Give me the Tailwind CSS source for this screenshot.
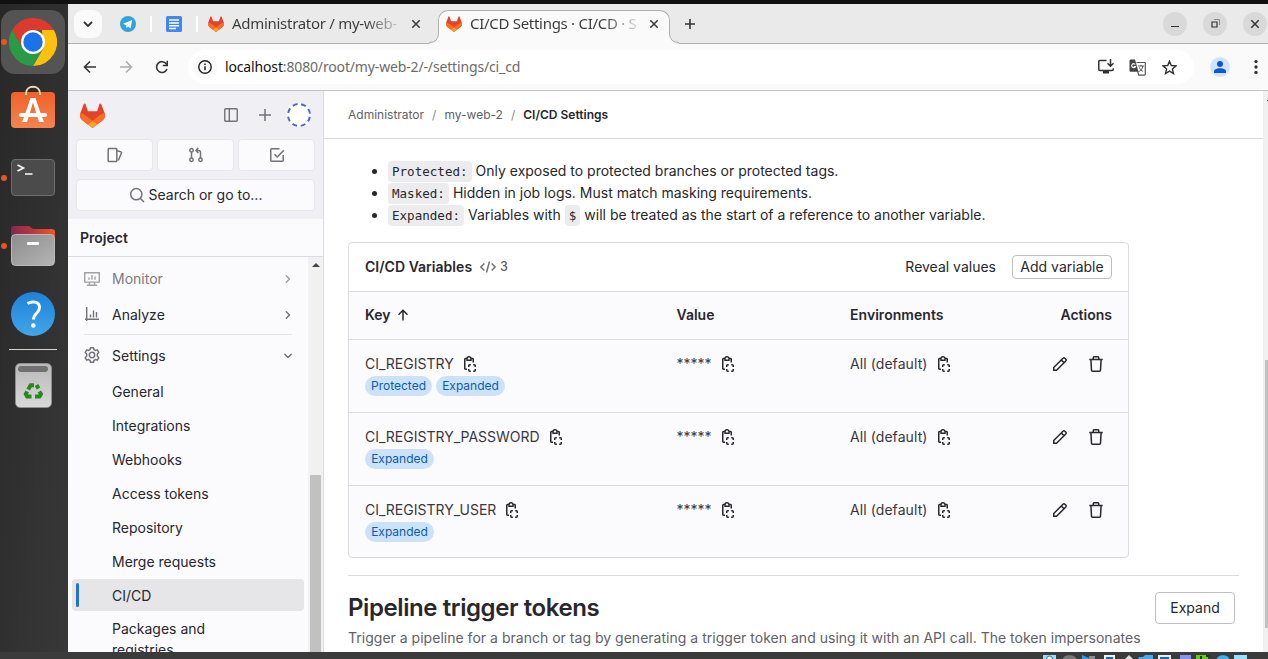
<!DOCTYPE html>
<html lang="en">
<head>
<meta charset="utf-8">
<title>CI/CD Settings · CI/CD · Settings</title>
<script src="https://cdn.jsdelivr.net/npm/@tailwindcss/browser@4"></script>
</head>
<body class="w-[1268px] h-[659px] overflow-hidden bg-white font-['Inter',sans-serif] text-[14px] leading-5 text-[#28272d]">
<svg class="hidden">
  <defs>
    <symbol id="fox" viewBox="0 0 24 24"><path fill="#E24329" d="M23.6 9.6 20.3.9a.86.86 0 0 0-1.6.1l-2.300 6.900H7.600L5.300 1A.86.86 0 0 0 3.700.9L.4 9.600a6.200 6.200 0 0 0 2 7.100L12 24l9.600-7.300a6.200 6.200 0 0 0 2-7.100Z"/><path fill="#FC6D26" d="M23.600 9.600a11.200 11.200 0 0 0-4.500 2L12 17l4.500 3.400 5.100-3.900a6.200 6.200 0 0 0 2-6.900Z"/><path fill="#FCA326" d="m7.500 20.400 3.600 2.800a1.400 1.400 0 0 0 1.800 0l3.600-2.800L12 17l-4.500 3.400Z"/><path fill="#FC6D26" d="M4.900 11.600A11.200 11.200 0 0 0 .4 9.600a6.200 6.200 0 0 0 2 6.900l5.100 3.900L12 17l-7.100-5.400Z"/></symbol>
    <symbol id="copy" viewBox="0 0 16 16"><g fill="none" stroke="currentColor" stroke-width="1.500"><path d="M5 13.250H3.500a.75.750 0 0 1-.75-.75V3.250a.75.750 0 0 1 .75-.75H5M9 2.500h1.500a.75.750 0 0 1 .75.750V6.500"/><path d="M5 4.250h4V2.700a2 2 0 0 0-4 0z" stroke-width="1.400"/><path d="M6.750 11V9.700a.9.900 0 0 1 .9-.9H8.800M11.200 8.800h1.150a.9.900 0 0 1 .9.900V11M13.250 13v1.300a.9.900 0 0 1-.9.900H11.200M8.800 15.200H7.650a.9.900 0 0 1-.9-.9V13"/></g></symbol>
    <symbol id="pencil" viewBox="0 0 16 16"><path fill="none" stroke="currentColor" stroke-width="1.500" d="M1.750 14.250v-2.700L11 2.250a1.300 1.300 0 0 1 1.900 0l.9.900a1.300 1.300 0 0 1 0 1.900L4.500 14.250zM9.300 4l2.800 2.800"/></symbol>
    <symbol id="trash" viewBox="0 0 16 16"><path fill="none" stroke="currentColor" stroke-width="1.500" d="M1.300 3.500h13.400M5.300 3.500V1.600a.9.900 0 0 1 .9-.9h3.600a.9.900 0 0 1 .9.900v1.900M2.900 3.500l.6 10.700a1 1 0 0 0 1 .95h7a1 1 0 0 0 1-.95l.6-10.700"/></symbol>
    <symbol id="chev" viewBox="0 0 16 16"><path fill="none" stroke="currentColor" stroke-width="1.500" stroke-linecap="round" stroke-linejoin="round" d="m6.300 4.800 3.200 3.200-3.200 3.200"/></symbol>
    <symbol id="close" viewBox="0 0 10 10"><path stroke="currentColor" stroke-width="1.500" d="m1.300 1.300 7.400 7.400m0-7.400L1.300 8.700"/></symbol>
  </defs>
</svg>

<div class="flex h-full flex-col">
  <div class="h-1 shrink-0 bg-[#111]"></div>
  <div class="flex h-[648px] shrink-0">
    <!-- dock -->
    <aside class="relative flex w-[68px] shrink-0 flex-col items-center bg-gradient-to-br from-[#282828] via-[#303030] to-[#383838] pt-[6px] pr-[2px]">
      <div class="flex h-16 w-16 items-center justify-center rounded-[14px] bg-[#545454]">
        <svg class="size-12" viewBox="0 0 48 48">
          <path fill="#dc3a2d" d="M3.200 12A24 24 0 0 1 44.800 12H24L13.600 30z"/>
          <path fill="#fcc00f" d="M44.800 12A24 24 0 0 1 24 48l10.400-18L33 12z"/>
          <path fill="#2a9a47" d="M3.200 12A24 24 0 0 0 24 48l10.400-18-20.800 0z"/>
          <circle cx="24" cy="24" r="12" fill="#fff"/><circle cx="24" cy="24" r="9.700" fill="#1a73e8"/>
        </svg>
      </div>
      <svg class="mt-[11px] h-[46px] w-[46px]" viewBox="0 0 46 46">
        <defs><linearGradient id="so" x2="0" y2="1"><stop stop-color="#f1602a"/><stop offset="1" stop-color="#f4844f"/></linearGradient></defs>
        <rect x="1" y="7" width="44" height="36" rx="4" fill="url(#so)"/>
        <path d="M16 10V8.500c0-9 14-9 14 0V10" fill="none" stroke="#f7dcae" stroke-width="2"/>
        <path d="M20.500 13h5l5 15h-4.300L23 17.500 19.800 28h-4.300zM14 32h4.500L17 37h-5zM27.500 32H32l2 5h-5z" fill="#fff"/>
        <rect x="9" y="28" width="28" height="4" rx="2" fill="#fff"/>
      </svg>
      <div class="mt-[28px] flex h-[37px] w-[44px] rounded-[4px] border border-[#6d6d6d] bg-[#4b4b4b] pt-[4px] pl-[5px]">
        <svg class="h-3 w-4" viewBox="0 0 16 12"><path d="m.5 1 6 3-6 3M8 10h7.500" fill="none" stroke="#fff" stroke-width="1.600"/></svg>
      </div>
      <svg class="mt-[29px] h-[42px] w-[46px]" viewBox="0 0 46 42">
        <defs><linearGradient id="fa"><stop stop-color="#842752"/><stop offset=".5" stop-color="#b8383f"/><stop offset="1" stop-color="#ee5a24"/></linearGradient><linearGradient id="fb" x2="1" y2="1"><stop stop-color="#8c8c8c"/><stop offset="1" stop-color="#b5b5b5"/></linearGradient></defs>
        <path d="M1 14V4a3 3 0 0 1 3-3h14c3 0 3 3 6 3h18a3 3 0 0 1 3 3v7z" fill="url(#fa)"/>
        <rect x="1.500" y="9.500" width="43" height="31" rx="4" fill="url(#fb)" stroke="#b9b9b9"/>
        <rect x="17" y="17" width="12" height="3" rx="1" fill="#fff"/>
      </svg>
      <svg class="mt-[24px] size-[46px]" viewBox="0 0 46 46">
        <defs><linearGradient id="hp" x2="0" y2="1"><stop stop-color="#1d82db"/><stop offset="1" stop-color="#42a5e8"/></linearGradient></defs>
        <circle cx="23" cy="23" r="22" fill="url(#hp)"/>
        <path d="M17.500 12.500c4-2.500 12-2.500 12 4 0 6-6 5.500-6 12" fill="none" stroke="#fff" stroke-width="3"/><circle cx="23.300" cy="34.500" r="2.300" fill="#fff"/>
      </svg>
      <div class="mt-3 h-px w-12 bg-[#d5d5d5]"></div>
      <div class="mt-[13px] flex h-[45px] w-[37px] flex-col items-center rounded-[5px] border border-[#8f8f8f] bg-gradient-to-b from-[#b9b9b9] to-[#d8d8d8] pt-[2px]">
        <div class="h-[6px] w-[30px] rounded-[3px] bg-[#717171]"></div>
        <svg class="mt-[9px] size-5" viewBox="0 0 20 20" fill="none" stroke="#26891d" stroke-width="4"><path d="m5.200 8.500 2.500-4.300h3.300M13.500 4l2 3.500M16.300 10.500 18 13l-1.500 2.500H12M8.500 15.500H4.200L2.800 13l1.500-2.500"/></svg>
      </div>
      <i class="absolute top-[35px] left-[1px] size-[6px] rounded-full bg-[#e95420]"></i>
      <i class="absolute top-[171px] left-[1px] size-[6px] rounded-full bg-[#e95420]"></i>
      <i class="absolute top-[239px] left-[1px] size-[6px] rounded-full bg-[#e95420]"></i>
    </aside>

    <div class="flex min-w-0 flex-1 flex-col">
      <!-- tab strip -->
      <div class="relative flex h-10 shrink-0 items-center border-b border-[#b0b0b0] bg-[#eaeaea] font-['Noto_Sans',sans-serif] text-[15px] text-[#3a3a3a]">
        <div class="ml-[6px] flex size-7 items-center justify-center rounded-[9px] bg-[#fafafa]"><svg class="h-2 w-3" viewBox="0 0 12 8"><path d="m2 2 4 4 4-4" fill="none" stroke="#333" stroke-width="1.800"/></svg></div>
        <svg class="ml-[18px] size-4" viewBox="0 0 16 16"><circle cx="8" cy="8" r="8" fill="#2fa3dc"/><path d="m3 7.800 9.200-3.700-1.700 8.300-2.500-1.800-1.500 1.400-.5-2.700z" fill="#fff"/><path d="m6 9.200 4.500-3.300-3.700 4z" fill="#b7dcf0"/></svg>
        <i class="ml-[14px] h-4 w-[2px] bg-white"></i>
        <svg class="ml-[14px] size-4" viewBox="0 0 16 16"><rect width="16" height="16" rx="1.500" fill="#4285f4"/><path d="M3 4h10M3 7h10M3 9.800h10M3 12.500h7" stroke="#fff" stroke-width="1.400"/></svg>
        <i class="ml-[14px] h-4 w-[2px] bg-white"></i>
        <svg class="ml-[10px] size-4"><use href="#fox"/></svg>
        <div class="ml-2 w-[167px] -translate-y-px whitespace-nowrap"><span class="bg-gradient-to-r from-[#3a3a3a] from-80% to-[#3a3a3a]/20 bg-clip-text tracking-[-0.29px] text-transparent">Administrator / my-web-</span></div>
        <svg class="ml-3 size-[10px]"><use href="#close"/></svg>
        <div class="absolute top-[6px] left-[370px] flex h-[34px] w-[232px] items-center rounded-t-[10px] border border-b-0 border-[#b0b0b0] bg-[#fafafa] pb-[7px] pl-[7px]">
          <svg class="absolute -left-[10px] bottom-0 h-[11px] w-[10px]" viewBox="0 0 10 11"><path d="M0 10.500Q9.500 10 9.500 0H10V11H0" fill="#fafafa"/><path d="M0 9.500Q9.500 9.500 9.500 0" fill="none" stroke="#b0b0b0"/></svg>
          <svg class="size-4"><use href="#fox"/></svg>
          <div class="ml-2 w-[167px] -translate-y-px whitespace-nowrap"><span class="bg-gradient-to-r from-[#3a3a3a] from-80% to-[#3a3a3a]/20 bg-clip-text tracking-[-0.29px] text-transparent">CI/CD Settings · CI/CD · S</span></div>
          <svg class="ml-3 size-[10px]"><use href="#close"/></svg>
          <svg class="absolute -right-[10px] bottom-0 h-[11px] w-[10px]" viewBox="0 0 10 11"><path d="M10 10.500Q.5 10 .5 0H0V11H10" fill="#fafafa"/><path d="M10 9.500Q.5 9.500.5 0" fill="none" stroke="#b0b0b0"/></svg>
        </div>
        <svg class="ml-[263px] size-3 shrink-0" viewBox="0 0 12 12"><path d="M6 1v10M1 6h10" stroke="#333" stroke-width="1.600"/></svg>
        <div class="ml-auto flex gap-4 pr-px">
          <div class="flex size-6 items-center justify-center rounded-full bg-[#d9d9d9]"><i class="mt-[5px] h-px w-2 bg-[#333]"></i></div>
          <div class="flex size-6 items-center justify-center rounded-full bg-[#d9d9d9]"><svg class="size-[9px]" viewBox="0 0 9 9"><path d="M1 3h5v5H1z" fill="none" stroke="#333" stroke-width="1.200"/><path d="M3 .5h5.500V6" fill="none" stroke="#888"/></svg></div>
          <div class="flex size-6 items-center justify-center rounded-full bg-[#d9d9d9]"><svg class="size-[10px] text-[#333]"><use href="#close"/></svg></div>
        </div>
      </div>
      <!-- toolbar -->
      <div class="flex h-[47px] shrink-0 items-center border-b border-[#c4c4c4] bg-[#fafafa] text-[#333]">
        <svg class="ml-[15px] size-[14px]" viewBox="0 0 14 14"><path d="M13 7H2M7 1.500 1.500 7 7 12.500" fill="none" stroke="currentColor" stroke-width="1.600"/></svg>
        <svg class="ml-[22px] size-[14px] text-[#adadad]" viewBox="0 0 14 14"><path d="M1 7h11M7 1.500 12.500 7 7 12.500" fill="none" stroke="currentColor" stroke-width="1.600"/></svg>
        <svg class="ml-[22px] size-[14px]" viewBox="0 0 14 14"><path d="M12 9a5.400 5.400 0 1 1-.6-5l1 1.200" fill="none" stroke="currentColor" stroke-width="1.600"/><path d="M13 .8v5.400H7.800V4.800h3.700V.8z" fill="currentColor"/></svg>
        <div class="ml-[19px] flex h-[34px] w-[1006px] items-center rounded-full bg-white pl-[5px]">
          <div class="flex size-6 items-center justify-center rounded-full bg-[#fafafa]"><svg class="size-[14px]" viewBox="0 0 14 14"><circle cx="7" cy="7" r="6.200" fill="none" stroke="#222" stroke-width="1.400"/><path d="M7 6.200V10.200M7 3.600V5" stroke="#222" stroke-width="1.500"/></svg></div>
          <div class="ml-[8px] font-['Noto_Sans',sans-serif] text-[14px] tracking-[-0.15px] text-[#6b6b6b]"><span class="text-[#111]">localhost</span>:8080/root/my-web-2/-/settings/ci_cd</div>
          <svg class="ml-auto h-4 w-4" viewBox="0 0 16 16"><path d="M8.500 1.500H1.800a1 1 0 0 0-1 1v8a1 1 0 0 0 1 1h12.400a1 1 0 0 0 1-1V9.300M12.500 0v7M9.500 4.300l3 3 3-3" fill="none" stroke="currentColor" stroke-width="1.500"/><path d="M5 12h6v2.500H5z" fill="currentColor"/></svg>
          <svg class="ml-[15px] h-[17px] w-[17px]" viewBox="0 0 17 17"><path d="M1.500.5H6l3.500 12.300H1.500a1 1 0 0 1-1-1V1.500a1 1 0 0 1 1-1z" fill="#444"/><path d="M7.500 3.500h8a.8.800 0 0 1 .8.800v11a.8.800 0 0 1-.8.800H9.800L8.500 12" fill="none" stroke="#555" stroke-width="1.200"/><path d="M6.300 5.500A2 2 0 1 0 6.500 7.500H4.800" stroke="#fff" fill="none" stroke-width="1.100"/><path d="M9 7h6M12 5.800V7m1.700 0c0 3-2 5-4 5.500M10.500 8.500c.5 2 2 3 3.500 4" fill="none" stroke="#555"/></svg>
          <svg class="mr-[17px] ml-4 size-[15px]" viewBox="0 0 15 15"><path d="m7.500 1.200 1.800 4.300 4.700.4-3.600 3.100 1.100 4.600-4-2.500-4 2.500L4.600 9 1 5.900l4.700-.4z" fill="none" stroke="currentColor" stroke-width="1.400"/></svg>
        </div>
        <svg class="ml-4 size-5" viewBox="0 0 20 20"><circle cx="10" cy="10" r="10" fill="#d3e3fd"/><circle cx="10" cy="7" r="3" fill="#0b57d0"/><path d="M4 16v-1.500c0-2.200 3-3.300 6-3.300s6 1.100 6 3.300V16z" fill="#0b57d0"/></svg>
        <svg class="ml-[24px] h-4 w-[4px]" viewBox="0 0 4 16" fill="#333"><circle cx="2" cy="2.600" r="1.700"/><circle cx="2" cy="8" r="1.700"/><circle cx="2" cy="13.400" r="1.700"/></svg>
      </div>

      <div class="flex min-h-0 flex-1">
        <!-- project sidebar -->
        <nav class="flex w-64 shrink-0 flex-col overflow-hidden border-r border-[#dcdcde] bg-[#fbfafd]">
          <div class="h-32 shrink-0 bg-[#f0eff3]">
            <div class="flex h-12 items-center pl-3 text-[#737278]">
              <svg class="size-[25px]"><use href="#fox"/></svg>
              <svg class="ml-[118px] size-4" viewBox="0 0 16 16"><path d="M2.750 1.750h10.500a1 1 0 0 1 1 1v10.500a1 1 0 0 1-1 1H2.750a1 1 0 0 1-1-1V2.750a1 1 0 0 1 1-1zM6.300 2v12" fill="none" stroke="currentColor" stroke-width="1.400"/></svg>
              <svg class="ml-[18px] size-4" viewBox="0 0 16 16"><path d="M8 2v12M2 8h12" stroke="currentColor" stroke-width="1.500"/></svg>
              <svg class="ml-[14px] size-6" viewBox="0 0 24 24"><circle cx="12" cy="12" r="12" fill="#fff"/><circle cx="12" cy="12" r="11" fill="none" stroke="#5468bd" stroke-width="2" stroke-dasharray="5 3.640" stroke-dashoffset="6.800"/></svg>
            </div>
            <div class="flex gap-[4px] px-2 text-[#737278]">
              <div class="flex h-8 w-[77px] items-center justify-center rounded-[4px] border border-[#e7e6eb] bg-[#fbfafd]"><svg class="size-4" viewBox="0 0 16 16"><path d="M2 1.500h7a.8.800 0 0 1 .8.800v11.400a.8.800 0 0 1-.8.800H2a.8.800 0 0 1-.8-.8V2.300a.8.800 0 0 1 .8-.8zM10.200 3.700l3.900 1.200a.7.700 0 0 1 .5.900L11.300 13.500" fill="none" stroke="currentColor" stroke-width="1.500"/></svg></div>
              <div class="flex h-8 w-[77px] items-center justify-center rounded-[4px] border border-[#e7e6eb] bg-[#fbfafd]"><svg class="size-4" viewBox="0 0 16 16"><g fill="none" stroke="currentColor" stroke-width="1.500"><circle cx="3.500" cy="3.200" r="1.700"/><circle cx="3.500" cy="12.800" r="1.700"/><circle cx="12.500" cy="12.800" r="1.700"/><path d="M3.500 5v6M12.500 11V5.500a2 2 0 0 0-2-2H8M10.300 1 8 3.500 10.300 6"/></g></svg></div>
              <div class="flex h-8 w-[77px] items-center justify-center rounded-[4px] border border-[#e7e6eb] bg-[#fbfafd]"><svg class="size-4" viewBox="0 0 16 16"><path d="M10.500 1.750H2.750a1 1 0 0 0-1 1v10.500a1 1 0 0 0 1 1h10.500a1 1 0 0 0 1-1V8M5.500 7.300 8.200 10l6.600-6.600" fill="none" stroke="currentColor" stroke-width="1.500"/></svg></div>
            </div>
            <div class="mx-2 mt-2 flex h-8 w-[239px] items-center justify-center gap-[4px] rounded-[4px] border border-[#e7e6eb] bg-[#fbfafd]"><svg class="size-4 text-[#737278]" viewBox="0 0 16 16"><path d="m11.500 11.500 3.500 3.500M12.900 7.200a5.600 5.600 0 1 1-11.200 0 5.600 5.600 0 0 1 11.200 0z" fill="none" stroke="currentColor" stroke-width="1.500"/></svg><span>Search or go to...</span></div>
          </div>
          <div class="flex h-[38px] shrink-0 items-center border-b border-[#dcdcde] pl-3 font-semibold">Project</div>
          <div class="flex min-h-0 flex-1 overflow-hidden">
            <div class="w-[240px] shrink-0 pt-[4px]">
              <div class="flex h-9 items-center pl-4 text-[#7c7b80]"><svg class="size-4 opacity-70" viewBox="0 0 16 16"><path d="M.7 1.700h14.600v9.400H.7zM5.500 11v3M10.500 11v3M3 14.300h10M5 6.500v2.300M8 4v4.800M11 5.500v3.300" fill="none" stroke="currentColor" stroke-width="1.400"/></svg><span class="ml-3">Monitor</span><svg class="mr-3 ml-auto size-4 opacity-70"><use href="#chev"/></svg></div>
              <div class="flex h-9 items-center pl-4"><svg class="size-4 text-[#737278]" viewBox="0 0 16 16"><path d="M2.700 0v14M1 12.300h14M6.500 7.500v3M9.500 3.500v7M12.500 5v5.500" fill="none" stroke="currentColor" stroke-width="1.400"/></svg><span class="ml-3">Analyze</span><svg class="mr-3 ml-auto size-4 text-[#737278]"><use href="#chev"/></svg></div>
              <div class="mx-4 mt-px mb-[3px] h-px bg-[#e4e3e8]"></div>
              <div class="flex h-9 items-center pl-4"><svg class="-mt-[2px] size-4 text-[#737278]" viewBox="0 0 16 16"><g fill="none" stroke="currentColor" stroke-width="1.500" stroke-linejoin="round"><path d="M6.500.75h3l.5 1.950 1.300.75 2-.6 1.500 2.500L13.350 6.900v2.200l1.450 1.550-1.500 2.500-2-.6-1.300.75-.5 1.950h-3L6 13.300l-1.300-.75-2 .6-1.500-2.500L2.650 9.100V6.900L1.200 5.350l1.500-2.500 2 .6L6 2.700z"/><circle cx="8" cy="8" r="2.700"/></g></svg><span class="ml-3">Settings</span><svg class="mr-3 ml-auto size-4 rotate-90 text-[#737278]"><use href="#chev"/></svg></div>
              <div class="flex h-9 items-center pl-11">General</div>
              <div class="mt-[-1px] flex h-[34px] items-center pl-11">Integrations</div>
              <div class="flex h-[34px] items-center pl-11">Webhooks</div>
              <div class="flex h-[34px] items-center pl-11">Access tokens</div>
              <div class="flex h-[34px] items-center pl-11">Repository</div>
              <div class="flex h-[34px] items-center pl-11">Merge requests</div>
              <div class="mr-1 ml-1 flex h-8 items-center rounded-[4px] bg-[#e6e5e8] pl-1"><i class="h-6 w-[3px] rounded bg-[#1f75cb]"></i><span class="ml-[33px] pt-[2px]">CI/CD</span></div>
              <div class="mt-[7px] w-[180px] pl-11 leading-[21px]">Packages and registries</div>
            </div>
            <div class="flex w-[15px] flex-col items-center bg-[#f1f1f1] pt-1"><i class="mt-[2px] h-0 w-0 border-x-4 border-b-4 border-x-transparent border-b-[#444]"></i><i class="mt-[208px] w-[11px] flex-1 bg-[#c1c1c1]"></i></div>
          </div>
        </nav>

        <!-- page -->
        <main class="flex w-[939px] shrink-0 flex-col overflow-hidden bg-white">
          <div class="flex h-12 shrink-0 items-center border-b border-[#dcdcde] pl-6 text-[12px] text-[#626168]"><span>Administrator</span><span class="mx-2 text-[#89888d]">/</span><span>my-web-2</span><span class="mx-2 text-[#89888d]">/</span><span class="font-semibold text-[#28272d]">CI/CD Settings</span></div>
          <div class="pr-6 pl-6">
            <ul class="mt-[21px] pl-6 leading-[22px]">
              <li class="flex h-[22px] items-center"><i class="mr-[11px] size-[5px] rounded-full bg-[#28272d]"></i><code class="mr-1 h-[21px] rounded-[4px] bg-[#ececef] px-[4px] font-['DejaVu_Sans_Mono',monospace] text-[12.550px] leading-[21px]">Protected:</code><span>Only exposed to protected branches or protected tags.</span></li>
              <li class="flex h-[22px] items-center"><i class="mr-[11px] size-[5px] rounded-full bg-[#28272d]"></i><code class="mr-1 h-[21px] rounded-[4px] bg-[#ececef] px-[4px] font-['DejaVu_Sans_Mono',monospace] text-[12.550px] leading-[21px]">Masked:</code><span>Hidden in job logs. Must match masking requirements.</span></li>
              <li class="flex h-[22px] items-center"><i class="mr-[11px] size-[5px] rounded-full bg-[#28272d]"></i><code class="mr-1 h-[21px] rounded-[4px] bg-[#ececef] px-[4px] font-['DejaVu_Sans_Mono',monospace] text-[12.550px] leading-[21px]">Expanded:</code><span>Variables with</span><code class="mx-[4px] h-[21px] rounded-[4px] bg-[#ececef] px-[4px] font-['DejaVu_Sans_Mono',monospace] text-[12.550px] leading-[21px]">$</code><span class="tracking-[0.016px]">will be treated as the start of a reference to another variable.</span></li>
            </ul>

            <section class="mt-4 w-[781px] rounded-[4px] border border-[#dcdcde] bg-[#fbfafd]">
              <div class="flex h-[49px] items-center rounded-t-[4px] border-b border-[#dcdcde] bg-white px-4">
                <span class="font-semibold tracking-[0.03px]">CI/CD Variables</span>
                <svg class="ml-2 size-4 text-[#737278]" viewBox="0 0 16 16"><path d="M4.300 4.500.9 8l3.400 3.500M11.700 4.500 15.100 8l-3.400 3.500M9.500 2.500l-3 11" fill="none" stroke="currentColor" stroke-width="1.500"/></svg>
                <span class="ml-1 text-[12.500px] font-medium text-[#626168]">3</span>
                <span class="ml-auto">Reveal values</span>
                <span class="ml-4 flex h-6 w-[100px] items-center justify-center rounded-[4px] border border-[#bfbfc3]">Add variable</span>
              </div>
              <div class="grid h-12 grid-cols-[311.500px_173.500px_1fr_auto] items-center border-b border-[#dcdcde] px-4 pb-[2px] font-semibold">
                <span class="flex items-center">Key<svg class="ml-[6px] size-3" viewBox="0 0 12 12"><path d="M6 11.500V1.500M1.500 5.700 6 1.300l4.500 4.400" fill="none" stroke="currentColor" stroke-width="1.500"/></svg></span><span>Value</span><span class="tracking-[0.04px]">Environments</span><span>Actions</span>
              </div>
              <div class="grid h-[73px] grid-cols-[311.500px_173.500px_1fr_auto] border-b border-[#dcdcde] px-4 pt-[14px] text-[#3a383f]">
                <div><div class="flex h-5 items-center"><span>CI_REGISTRY</span><svg class="ml-2 size-4 text-[#28272d]"><use href="#copy"/></svg></div>
                  <div class="mt-[2px] flex gap-1 text-[12px] text-[#0b5cad]"><span class="flex h-5 w-[67px] items-center justify-center rounded-full bg-[#cbe2f9]">Protected</span><span class="flex h-5 w-[69px] items-center justify-center rounded-full bg-[#cbe2f9]">Expanded</span></div></div>
                <div class="flex h-5 items-center"><span>*****</span><svg class="ml-2 size-4 text-[#28272d]"><use href="#copy"/></svg></div>
                <div class="flex h-5 items-center"><span class="tracking-[0.08px]">All (default)</span><svg class="ml-2 size-4 text-[#28272d]"><use href="#copy"/></svg></div>
                <div class="flex h-5 items-center gap-5 pr-2 text-[#28272d]"><svg class="size-4"><use href="#pencil"/></svg><svg class="size-4"><use href="#trash"/></svg></div>
              </div>
              <div class="grid h-[73px] grid-cols-[311.500px_173.500px_1fr_auto] border-b border-[#dcdcde] px-4 pt-[14px] text-[#3a383f]">
                <div><div class="flex h-5 items-center"><span>CI_REGISTRY_PASSWORD</span><svg class="ml-2 size-4 text-[#28272d]"><use href="#copy"/></svg></div>
                  <div class="mt-[2px] flex gap-1 text-[12px] text-[#0b5cad]"><span class="flex h-5 w-[69px] items-center justify-center rounded-full bg-[#cbe2f9]">Expanded</span></div></div>
                <div class="flex h-5 items-center"><span>*****</span><svg class="ml-2 size-4 text-[#28272d]"><use href="#copy"/></svg></div>
                <div class="flex h-5 items-center"><span class="tracking-[0.08px]">All (default)</span><svg class="ml-2 size-4 text-[#28272d]"><use href="#copy"/></svg></div>
                <div class="flex h-5 items-center gap-5 pr-2 text-[#28272d]"><svg class="size-4"><use href="#pencil"/></svg><svg class="size-4"><use href="#trash"/></svg></div>
              </div>
              <div class="grid h-[71px] grid-cols-[311.500px_173.500px_1fr_auto] px-4 pt-[14px] text-[#3a383f]">
                <div><div class="flex h-5 items-center"><span>CI_REGISTRY_USER</span><svg class="ml-2 size-4 text-[#28272d]"><use href="#copy"/></svg></div>
                  <div class="mt-[2px] flex gap-1 text-[12px] text-[#0b5cad]"><span class="flex h-5 w-[69px] items-center justify-center rounded-full bg-[#cbe2f9]">Expanded</span></div></div>
                <div class="flex h-5 items-center"><span>*****</span><svg class="ml-2 size-4 text-[#28272d]"><use href="#copy"/></svg></div>
                <div class="flex h-5 items-center"><span class="tracking-[0.08px]">All (default)</span><svg class="ml-2 size-4 text-[#28272d]"><use href="#copy"/></svg></div>
                <div class="flex h-5 items-center gap-5 pr-2 text-[#28272d]"><svg class="size-4"><use href="#pencil"/></svg><svg class="size-4"><use href="#trash"/></svg></div>
              </div>
            </section>

            <section class="mt-[17px] border-t border-[#dcdcde]">
              <div class="mt-4 flex h-8 items-center justify-between pr-1">
                <h2 class="text-[24px] leading-8 font-semibold tracking-[-0.41px]">Pipeline trigger tokens</h2>
                <span class="flex h-8 w-20 items-center justify-center rounded-[4px] border border-[#bfbfc3]">Expand</span>
              </div>
              <p class="mt-[4px] tracking-[0.016px] whitespace-nowrap text-[#626168]">Trigger a pipeline for a branch or tag by generating a trigger token and using it with an API call. The token impersonates</p>
            </section>
          </div>
        </main>
        <div class="flex w-[5px] shrink-0 flex-col items-end bg-[#f1f1f1]"><i class="mt-[9px] h-px w-px bg-[#444]"></i><i class="mt-[259px] h-[268px] w-[3px] bg-[#c1c1c1]"></i></div>
      </div>
    </div>
  </div>
  <!-- virtual machine status bar -->
  <div class="flex h-[7px] shrink-0 items-start overflow-hidden bg-[#3b3b3c] pl-[1043px] pt-[3px]">
    <svg class="h-[4px] w-[206px]" viewBox="0 0 206 4"><path fill="#9adcf8" d="M0 0h13v4H0z"/><circle cx="6.500" cy="4" r="3" fill="#fff" stroke="#2769b8"/><path fill="#777" d="M20 4c0-5 13-5 13 0z"/><path fill="#4296dc" d="m39 0 9 4h-9z"/><path fill="#8b8b8b" d="M46 1h6v3h-6z"/><path fill="#f4f4f4" d="M61 0h11v4H61z"/><path fill="#2464ad" d="M63 2h7v2h-7z"/><path fill="#ddd" d="m82 4 4-4 4 4z"/><path fill="#4da8ea" d="M96 2h4l2-2h8v4H95z"/><path fill="#eee" d="M115 0h13v4h-13z"/><path fill="#2464ad" d="M117 2h9v2h-9z"/><path fill="#8a91e8" d="M137 0h11v4h-11z"/><path fill="#69c722" d="M153 0h12v4h-12z"/><path fill="#173c0b" d="M157 1h2v3h-2zM163 0h4v2h-4z"/><path fill="#42aee8" d="M174 4c0-5 12-5 12 0z"/><path fill="#9adff8" d="M191 0h13v4h-13z"/></svg>
  </div>
</div>
</body>
</html>
